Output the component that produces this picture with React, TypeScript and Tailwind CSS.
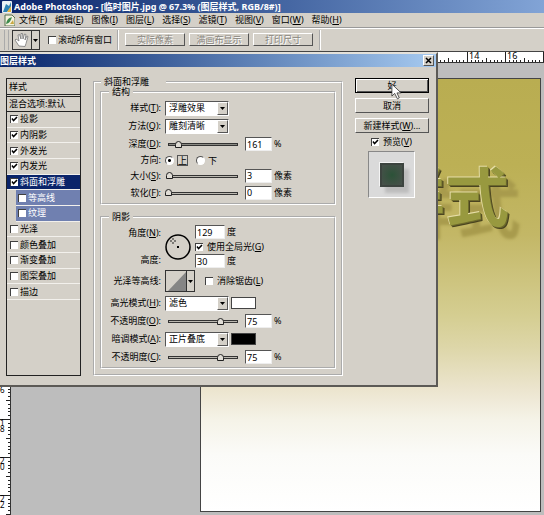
import React, { useState } from 'react';

function Mnemonic({ text, k, tail = '' }: { text: string; k: string; tail?: string }) {
  return (
    <span className="whitespace-nowrap">
      {text}(<u className="underline-offset-1">{k}</u>){tail}
    </span>
  );
}

function Tick({ checked, label, className = '' }: { checked?: boolean; label: React.ReactNode; className?: string }) {
  return (
    <label className={`flex items-center gap-1 whitespace-nowrap ${className}`}>
      <span className="relative flex size-2 shrink-0">
        <input
          type="checkbox"
          defaultChecked={checked}
          className="peer size-2 appearance-none border-t border-l border-[#404040] bg-white"
        />
        <svg viewBox="0 0 8 8" className="pointer-events-none absolute inset-0 hidden size-2 peer-checked:block">
          <path d="M2 3.5 L3.6 5.6 L7 2" fill="none" stroke="#000" strokeWidth="1.5" />
        </svg>
      </span>
      <span>{label}</span>
    </label>
  );
}

function Drop({ id, options }: { id: string; options: string[] }) {
  return (
    <span className="relative flex h-[15px] w-16 border border-t-[#555] border-l-[#555] border-r-white border-b-white bg-white">
      <select id={id} className="w-full appearance-none bg-white pl-[3px] leading-3 outline-none">
        {options.map((o) => (
          <option key={o}>{o}</option>
        ))}
      </select>
      <span className="pointer-events-none absolute inset-y-0 right-0 flex w-[11px] items-center justify-center border border-t-white border-l-white border-r-[#555] border-b-[#555] bg-[#d4d0c8]">
        <svg viewBox="0 0 5 3" className="h-[3px] w-[5px]">
          <path d="M0 0 H5 L2.5 3 Z" />
        </svg>
      </span>
    </span>
  );
}

function NumberBox({ id, value, className = 'w-[27px]' }: { id: string; value: string; className?: string }) {
  return (
    <input
      id={id}
      type="text"
      defaultValue={value}
      className={`h-[14px] border border-t-[#555] border-l-[#555] border-r-[#eee] border-b-[#eee] bg-white pl-px text-[9px] outline-none ${className}`}
    />
  );
}

function Slide({ label, value, thick }: { label: string; value: number; thick?: boolean }) {
  return (
    <span className="relative flex h-3 w-[76px] items-center">
      <span className={`absolute inset-x-[3px] top-[5px] h-[3px] border border-[#333] ${thick ? 'bg-[#8a8a84]' : 'bg-[#bbb8b0]'}`} />
      <input
        type="range"
        aria-label={label}
        defaultValue={value}
        className="relative h-3 w-full appearance-none bg-transparent [&::-webkit-slider-thumb]:h-[7px] [&::-webkit-slider-thumb]:w-[7px] [&::-webkit-slider-thumb]:appearance-none [&::-webkit-slider-thumb]:rounded-t-full [&::-webkit-slider-thumb]:border [&::-webkit-slider-thumb]:border-[#222] [&::-webkit-slider-thumb]:bg-[#e0ddd6]"
      />
    </span>
  );
}

function Row({ label, htmlFor, className = 'h-[18px]', children }: { label: React.ReactNode; htmlFor?: string; className?: string; children: React.ReactNode }) {
  return (
    <div className={`flex items-center gap-1 ${className}`}>
      <label htmlFor={htmlFor} className="w-[59px] shrink-0 text-right whitespace-nowrap">
        {label}
      </label>
      {children}
    </div>
  );
}

function SliderRow({ id, name, k, value, shown, unit, thick, className }: { id: string; name: string; k: string; value: number; shown: string; unit: string; thick?: boolean; className?: string }) {
  return (
    <Row label={<Mnemonic text={name} k={k} tail=":" />} htmlFor={id} className={className}>
      <Slide label={name} value={value} thick={thick} />
      <span className="flex items-center gap-[2px]">
        <NumberBox id={id} value={shown} />
        <span>{unit}</span>
      </span>
    </Row>
  );
}

const raised = 'border border-t-white border-l-white border-r-[#555] border-b-[#555] bg-[#d4d0c8]';

const menus = [
  ['文件', 'F'],
  ['编辑', 'E'],
  ['图像', 'I'],
  ['图层', 'L'],
  ['选择', 'S'],
  ['滤镜', 'T'],
  ['视图', 'V'],
  ['窗口', 'W'],
  ['帮助', 'H'],
];

const effects = [
  { name: '投影', on: true },
  { name: '内阴影', on: true },
  { name: '外发光', on: true },
  { name: '内发光', on: true },
  { name: '斜面和浮雕', on: true, selected: true },
  { name: '等高线', on: false, sub: true },
  { name: '纹理', on: false, sub: true },
  { name: '光泽', on: false },
  { name: '颜色叠加', on: false },
  { name: '渐变叠加', on: false },
  { name: '图案叠加', on: false },
  { name: '描边', on: false },
];

const steps = Array.from({ length: 9 }, (_, i) => i + 1);
const marks = Array.from({ length: 40 }, (_, i) => i);
const topLabels = [12, 13];
const sideLabels = [9, 10, 11];

function TopRuler() {
  return (
    <div className="h-[11px] shrink-0 overflow-hidden border-b border-[#333] bg-white">
      <svg width="1600" height="10" shapeRendering="crispEdges" stroke="#222">
        {marks.map((m) => {
          const x = 11 + m * 38;
          return (
            <g key={m}>
              <path d={`M${x + 0.5} 0V10`} />
              {steps.map((s) => (
                <path key={s} d={`M${Math.round(x + s * 3.8) + 0.5} ${s === 5 ? 6 : 8}V10`} />
              ))}
            </g>
          );
        })}
        {topLabels.map((m) => (
          <text key={m} x={13 + m * 38} y="7" stroke="none" fontSize="9">
            {m * 2 - 10}
          </text>
        ))}
      </svg>
    </div>
  );
}

function SideRuler() {
  return (
    <div className="w-[11px] shrink-0 overflow-hidden border-r border-[#333] bg-white">
      <svg width="10" height="1600" shapeRendering="crispEdges" stroke="#222">
        {marks.map((m) => {
          const y = 15 + m * 38;
          return (
            <g key={m}>
              <path d={`M0 ${y - 0.5}H10`} />
              {steps.map((s) => (
                <path key={s} d={`M${s === 5 ? 6 : 8} ${Math.round(y + s * 3.8) - 0.5}H10`} />
              ))}
            </g>
          );
        })}
        <text x="0" y="330" stroke="none" fontSize="8">6</text>
        {sideLabels.map((m) => {
          const [a, b] = String(m * 2).split('');
          const y = 15 + m * 38;
          return (
            <g key={m} stroke="none" fontSize="8">
              <text x="0" y={y + 6}>{a}</text>
              <text x="0" y={y + 12}>{b}</text>
            </g>
          );
        })}
      </svg>
    </div>
  );
}

function StyleList() {
  return (
    <div className="flex w-[75px] shrink-0 flex-col border border-[#222]">
      <div className="flex h-4 items-center border-b border-[#222] pl-[2px]">样式</div>
      <div className="mt-px flex h-4 items-center border-t border-b border-[#222] pl-[2px] whitespace-nowrap">混合选项:默认</div>
      <div className="flex h-[188px] flex-col">
        {effects.map((e) => (
          <div
            key={e.name}
            className={`flex flex-1 items-center border-b border-[#f2f0ec] ${e.selected ? 'bg-[#0a246a] text-white' : ''} ${e.sub ? 'ml-[9px] bg-[#7080b0] pl-[2px] text-white' : 'pl-[3px]'}`}
          >
            <Tick checked={e.on} label={e.name} className="gap-[2px]" />
          </div>
        ))}
      </div>
    </div>
  );
}

function Structure() {
  const [dir, setDir] = useState('上');
  return (
    <fieldset className="border-2 border-white px-0 pt-[2px] pb-[2px] [border-style:groove]">
      <legend className="ml-[7px] px-[3px] leading-[10px]">结构</legend>
      <Row label={<Mnemonic text="样式" k="T" tail=":" />} htmlFor="style">
        <Drop id="style" options={['浮雕效果', '外斜面', '内斜面']} />
      </Row>
      <Row label={<Mnemonic text="方法" k="Q" tail=":" />} htmlFor="method">
        <Drop id="method" options={['雕刻清晰', '平滑', '雕刻柔和']} />
      </Row>
      <SliderRow id="depth" name="深度" k="D" value={14} shown="161" unit="%" thick />
      <Row label="方向:" className="h-[14px]">
        {['上', '下'].map((d) => (
          <label key={d} className="mr-1 flex items-center gap-[3px]">
            <input
              type="radio"
              name="direction"
              checked={dir === d}
              onChange={() => setDir(d)}
              className="size-[9px] appearance-none rounded-full border border-t-[#555] border-l-[#555] border-r-white border-b-white bg-white bg-[radial-gradient(circle,#000_0_1px,transparent_2px)] not-checked:bg-none"
            />
            <span className={d === dir ? 'border border-[#555] leading-[9px]' : 'leading-[11px]'}>{d}</span>
          </label>
        ))}
      </Row>
      <SliderRow id="size" name="大小" k="S" value={1} shown="3" unit="像素" className="h-[17px]" />
      <SliderRow id="soften" name="软化" k="F" value={0} shown="0" unit="像素" className="h-[17px]" />
    </fieldset>
  );
}

function Shading() {
  return (
    <fieldset className="mt-[7px] border-2 border-white px-0 pt-[3px] pb-px [border-style:groove]">
      <legend className="ml-[7px] px-[3px] leading-[10px]">阴影</legend>
      <div className="flex h-[43px] items-center gap-1">
        <div className="flex h-full w-[59px] flex-col justify-between py-px text-right">
          <label htmlFor="angle" className="leading-[14px]"><Mnemonic text="角度" k="N" tail=":" /></label>
          <label htmlFor="altitude" className="leading-[14px]">高度:</label>
        </div>
        <svg viewBox="0 0 26 26" className="size-[26px]">
          <circle cx="13" cy="13" r="12" fill="#d4d0c8" stroke="#000" strokeWidth="1.5" />
          <rect x="12" y="12" width="2" height="2" />
          <path d="M8 4v2M8 8v2M5 7h2M9 7h2" stroke="#222" />
        </svg>
        <div className="flex h-full flex-col justify-between">
          <span className="flex items-center gap-[2px]"><NumberBox id="angle" value="129" className="w-[30px]" />度</span>
          <Tick checked label={<Mnemonic text="使用全局光" k="G" />} className="h-3" />
          <span className="flex items-center gap-[2px]"><NumberBox id="altitude" value="30" className="w-[30px]" />度</span>
        </div>
      </div>
      <Row label="光泽等高线:" className="h-[26px]">
        <button aria-label="光泽等高线" className="flex h-[22px] w-[30px] border border-[#333] bg-[#d4d0c8]">
          <svg viewBox="0 0 28 20" className="h-5 w-7">
            <path d="M2 20 L20 1 V20 Z" fill="#858585" />
            <path d="M20.5 0V20" stroke="#333" />
            <path d="M22 9h5l-2.5 3z" />
          </svg>
        </button>
        <Tick label={<Mnemonic text="消除锯齿" k="L" />} className="ml-[6px]" />
      </Row>
      <Row label={<Mnemonic text="高光模式" k="H" tail=":" />} htmlFor="hi">
        <Drop id="hi" options={['滤色', '正常']} />
        <button aria-label="高光颜色" className="-ml-[2px] h-3 w-[25px] border border-[#444] bg-white" />
      </Row>
      <SliderRow id="hiop" name="不透明度" k="O" value={75} shown="75" unit="%" />
      <Row label={<Mnemonic text="暗调模式" k="A" tail=":" />} htmlFor="lo">
        <Drop id="lo" options={['正片叠底', '正常']} />
        <button aria-label="暗调颜色" className="-ml-[2px] h-3 w-[25px] border border-[#444] bg-black" />
      </Row>
      <SliderRow id="loop" name="不透明度" k="C" value={75} shown="75" unit="%" />
    </fieldset>
  );
}

function LayerStyleDialog() {
  return (
    <section className="absolute top-0 left-0 w-[438px] border-t-2 border-r-2 border-b-2 border-t-[#e4e1da] border-r-[#5c5a56] border-b-[#5c5a56] bg-[#d4d0c8]">
      <header className="flex h-[13px] items-center justify-between bg-linear-to-r from-[#0a246a] to-[#a6caf0] pr-[2px]">
        <h1 className="text-[9px] leading-[13px] font-bold text-white">图层样式</h1>
        <button aria-label="关闭" className={`flex size-[11px] items-center justify-center ${raised}`}>
          <svg viewBox="0 0 7 7" className="size-[7px]">
            <path d="M1 1L6 6M6 1L1 6" stroke="#000" strokeWidth="1.5" />
          </svg>
        </button>
      </header>
      <div className="flex pt-[11px] pr-[7px] pb-[9px] pl-[6px]">
        <StyleList />
        <fieldset className="-mt-px ml-3 w-[250px] border-2 border-white px-[5px] pb-[5px] [border-style:groove]">
          <legend className="ml-px pr-[17px] pl-[3px] leading-[10px]">斜面和浮雕</legend>
          <Structure />
          <Shading />
        </fieldset>
        <div className="ml-3 flex flex-1 flex-col gap-[5px]">
          <button className="relative h-[15px] border border-black bg-[#d4d0c8] shadow-[inset_1px_1px_0_#fff,inset_-1px_-1px_0_#555]">
            好
            <svg viewBox="0 0 12 18" className="absolute top-1 left-[35px] h-[17px] w-[11px]">
              <path d="M1 1V14L4 11L7 17L9 16L6.500 10.500H11Z" fill="#fff" stroke="#222" strokeWidth=".8" />
            </svg>
          </button>
          <button className={`h-[15px] ${raised}`}>取消</button>
          <button className={`h-[15px] ${raised}`}><Mnemonic text="新建样式" k="W" tail="..." /></button>
          <Tick checked label={<Mnemonic text="预览" k="V" />} className="ml-4 h-2" />
          <div className="ml-[13px] flex size-[47px] items-center justify-center border border-t-[#888] border-l-[#888] border-r-white border-b-white bg-[#dadada]">
            <div className="size-6 border-2 border-[#3c443f] bg-radial from-[#2b5238] to-[#48504b] shadow-[-1px_-1px_0_#f4f4f4,5px_6px_3px_#bcbcbc]" />
          </div>
        </div>
      </div>
    </section>
  );
}

export default function App() {
  return (
    <main
      lang="zh-CN"
      className="flex h-screen flex-col overflow-hidden bg-[#d4d0c8] font-['Noto_Sans','Noto_Sans_CJK_SC',sans-serif] text-[9px] leading-3 text-black"
    >
      <header className="flex h-[13px] shrink-0 items-center gap-[2px] bg-linear-to-r from-[#0a246a] to-[#82a4d6] pl-[2px] leading-[13px] font-bold whitespace-nowrap text-white">
        <svg viewBox="0 0 10 12" className="h-3 w-[10px]">
          <rect width="10" height="12" rx="1" fill="#e8f0f5" />
          <path d="M1 11L4 3l3 2 2-4v5l-4 5z" fill="#2d83b5" />
          <path d="M5 11l4-6v6z" fill="#e6b23a" />
        </svg>
        Adobe Photoshop - [临时图片.jpg @ 67.3% (图层样式, RGB/8#)]
      </header>
      <nav className="flex h-[14px] shrink-0 items-center gap-2 pl-1">
        <svg viewBox="0 0 11 12" className="-mr-1 h-3 w-[11px]">
          <path d="M1 1h7l3 3v8H1z" fill="#f5f2df" stroke="#55704c" />
          <path d="M2 10c1-5 3-6 6-7-1 3-2 6-6 7z" fill="#3c8a4c" />
          <path d="M6 10l3-4 1 4z" fill="#c9a942" />
        </svg>
        {menus.map(([t, k]) => (
          <button key={k}><Mnemonic text={t} k={k} /></button>
        ))}
      </nav>
      <div className="flex h-[25px] shrink-0 items-center border-t border-b border-t-[#999] border-b-[#444] pl-1 shadow-[inset_0_1px_0_#fff]">
        <span className="mr-[3px] h-5 w-[5px] border-r border-l border-[#aaa]" />
        <button aria-label="抓手工具" className="mr-2 flex h-[20px] w-7 border border-[#333]">
          <svg viewBox="0 0 26 18" className="h-[18px] w-[26px]">
            <path d="M6 15L2 9l1-1 3 2-1-6 1.500-.5L8 8V2.500h1.500L10 8l1.500-5 1.500.5L12 9l2-4 1 .5-2 7-1 3z" fill="#fff" stroke="#777" strokeWidth=".8" />
            <path d="M18.500 0V18" stroke="#333" />
            <path d="M20 8h5l-2.500 3z" />
          </svg>
        </button>
        <Tick label="滚动所有窗口" className="gap-[2px]" />
        <span className="mr-[6px] ml-[5px] h-5 w-[2px] border-r border-l border-l-[#aaa] border-r-white" />
        <div className="flex gap-1">
          {['实际像素', '满画布显示', '打印尺寸'].map((b) => (
            <button key={b} disabled className={`h-[13px] w-[60px] leading-[11px] text-[#8a8780] [text-shadow:1px_1px_0_#fff] ${raised}`}>
              {b}
            </button>
          ))}
        </div>
        <span className="ml-[6px] h-5 w-[2px] border-r border-l border-l-[#aaa] border-r-white" />
      </div>
      <div className="relative flex min-h-0 flex-1 flex-col bg-[#bdbdbd]">
        <TopRuler />
        <div className="flex min-h-0 flex-1">
          <SideRuler />
          <div className="mt-[15px] mr-[3px] mb-[3px] ml-[189px] flex-1 overflow-hidden border border-[#444] bg-linear-[180deg,#b9ad51_0%,#bcb055_20%,#c3b766_36%,#d5ce92_55%,#ddd6a8_62%,#ece5cf_72%,#f5f3e8_79%,#fbfbf8_87%,#fff_100%] pt-[78px] pr-[31px]">
            <p className="text-right text-[64px] leading-[72px] font-bold whitespace-nowrap text-[#98993f] font-['Noto_Sans_CJK_SC',sans-serif] [text-shadow:-1px_-1px_0_#e6dda6,1px_1px_0_#6d6a2c,2px_2px_0_#4a4420,12px_12px_3px_#a89b4d]">
              样式
            </p>
          </div>
        </div>
        <LayerStyleDialog />
      </div>
    </main>
  );
}
